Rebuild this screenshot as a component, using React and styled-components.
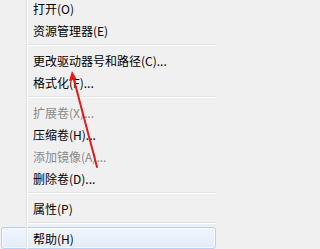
import React from 'react'
import styled, { createGlobalStyle } from 'styled-components'

const GlobalStyle = createGlobalStyle`
  html, body {
    margin: 0;
    padding: 0;
    background: #f0f0f0;
    overflow: hidden;
  }
`

const items = [
  { label: '打开(O)' },
  { label: '资源管理器(E)' },
  { separator: true },
  { label: '更改驱动器号和路径(C)...' },
  { label: '格式化(F)...' },
  { separator: true },
  { label: '扩展卷(X)...', disabled: true },
  { label: '压缩卷(H)...' },
  { label: '添加镜像(A)...', disabled: true },
  { label: '删除卷(D)...' },
  { separator: true },
  { label: '属性(P)' },
  { separator: true },
  { label: '帮助(H)', highlighted: true }
]

const Menu = () => (
  <Container>
    <Gutter />
    <List>
      {items.map((item, i) =>
        item.separator
          ? <Separator key={i} />
          : (
            <Item key={i} $disabled={item.disabled} $highlighted={item.highlighted}>
              {item.label}
            </Item>
          )
      )}
    </List>
    <Pointer />
  </Container>
)

// red annotation arrow drawn over the menu
const Pointer = () => (
  <ArrowLayer width="217" height="249" viewBox="0 0 217 249">
    <line x1="97" y1="167" x2="73.5" y2="78" stroke="#e51b1b" strokeWidth="2" strokeLinecap="round" />
    <polygon points="72,71 69,81 76.5,79" fill="#e51b1b" />
  </ArrowLayer>
)

export default function App() {
  return (
    <>
      <GlobalStyle />
      <Menu />
    </>
  )
}

const Container = styled.div`
  position: relative;
  width: 217px;
  height: 249px;
  overflow: hidden;
  background: #f0f0f0;
  font-family: "Noto Sans CJK SC", "Microsoft YaHei", sans-serif;
  font-size: 12px;
`

const Gutter = styled.div`
  position: absolute;
  top: 0;
  bottom: 0;
  left: 26px;
  width: 1px;
  border-right: 1px solid #fff;
  background: #e2e3e3;
`

const List = styled.div`
  display: flex;
  flex-direction: column;
  width: 217px;
  box-sizing: border-box;
  margin-top: -3px;
  padding: 0 1px;
`

const Item = styled.div`
  height: 22px;
  line-height: 21px;
  padding-left: 31px;
  box-sizing: border-box;
  color: ${p => (p.$disabled ? '#8a8a8a' : '#000')};
  white-space: nowrap;
  border: 1px solid transparent;
  border-radius: 3px;
  ${p => p.$highlighted && `
    border-color: #b4d2f6;
    background: linear-gradient(to bottom, #f1f6fd, #e3ecf9);
    box-shadow: inset 0 0 0 1px rgba(255, 255, 255, 0.6);
  `}
`

const Separator = styled.div`
  height: 8px;
  margin-left: 26px;
  padding-top: 3px;
  box-sizing: border-box;
  &::after {
    content: '';
    display: block;
    height: 1px;
    background: #e2e3e3;
    border-bottom: 1px solid #fff;
  }
`

const ArrowLayer = styled.svg`
  position: absolute;
  top: 0;
  left: 0;
  pointer-events: none;
`
